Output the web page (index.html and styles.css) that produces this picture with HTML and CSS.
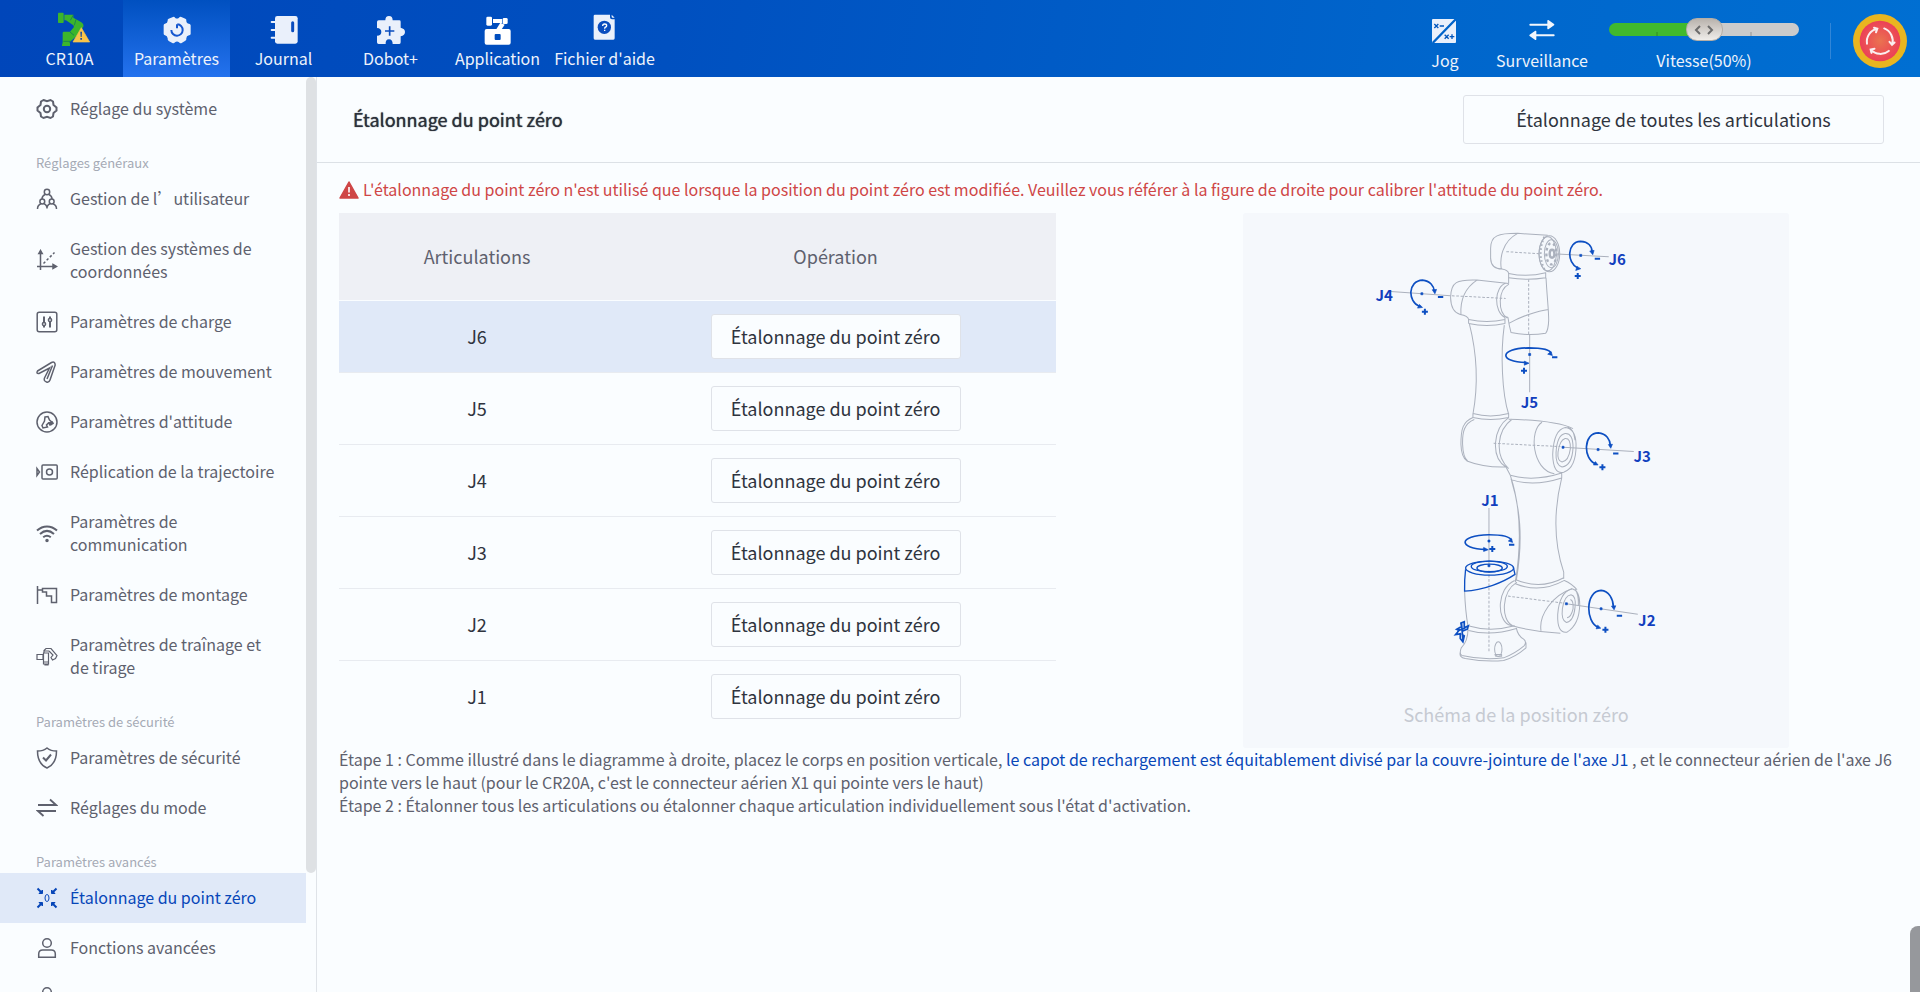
FILE: index.html
```html
<!DOCTYPE html>
<html lang="fr">
<head>
<meta charset="utf-8">
<title>Étalonnage du point zéro</title>
<link rel="stylesheet" href="styles.css">
</head>
<body>
<div class="app">
  <header class="topbar">
    <nav class="tabs" aria-label="Navigation principale">
      <button class="tab" type="button">
        <svg class="tab-icon" viewBox="34 36 108 108" aria-hidden="true">
          <g fill="#3cb52c"><path d="M52 40q0-2 2-2h12q3 0 3 3v25q0 3-3 3H54q-2 0-2-3z"/><path d="M71 44h27v9l24 14q8 5 6 13l-7 9-14 20-19 16h-2l2 5v6H66V99q0-4 4-4h18l12-14-2-5-22-15H71z"/><path d="M64 138v-4l4-8h16l4 8v4z"/></g>
          <path d="M98 45l-9 16M106 58l-5 18M88 96l12 10M68 124h20" stroke="#0a6f5c" stroke-width="2" fill="none"/>
          <path d="M122 83l25 43H97z" fill="#f9c449" stroke="#f9c449" stroke-width="2" stroke-linejoin="round"/>
          <path d="M119 95h5l-1 16h-3zM119 114h5v5h-5z" fill="#1a4a9e"/>
        </svg>
        <span>CR10A</span>
      </button>
      <button class="tab is-active" type="button">
        <svg class="tab-icon" viewBox="355 36 108 108" aria-hidden="true">
          <path fill="#eaf0fb" d="M397 51q4-2 6 2 6 5 12 0 3-4 7-2l12 5q4 2 3 6 0 8 8 9 4 1 5 5v26q-1 4-5 4-8 2-8 9 1 5-3 7l-11 7q-5 2-8-2-6-5-12 0-3 4-8 2l-11-6q-4-3-3-8-1-8-8-9-4-1-4-5V76q0-4 4-5 8-2 8-9-1-4 3-6z"/>
          <path d="M410 73A17 17 0 1 1 392 90M409 73v12" fill="none" stroke="#1657cf" stroke-width="6"/>
        </svg>
        <span>Paramètres</span>
      </button>
      <button class="tab" type="button">
        <svg class="tab-icon" viewBox="676 36 108 108" aria-hidden="true">
          <rect x="703" y="48" width="68" height="83" rx="7" fill="#eaf0fb"/>
          <path d="M693 66h13M693 90h13M693 113h13" stroke="#eaf0fb" stroke-width="6" stroke-linecap="round"/>
          <path d="M756 68v24" stroke="#0a4cbe" stroke-width="9" stroke-linecap="round"/>
        </svg>
        <span>Journal</span>
      </button>
      <button class="tab" type="button">
        <svg class="tab-icon" viewBox="67 36 108 108" aria-hidden="true">
          <path fill="#eaf0fb" d="M84 61h20q0-13 11-13t11 13h20q4 0 4 4v18q13 3 13 13t-13 13v18q0 5-4 5h-20q0-14-11-14t-10 14H84q-5 0-5-5v-20q13 0 13-11T79 84V66q0-5 5-5z"/>
          <path d="M103 93h28M117 79v28" stroke="#0a4cbe" stroke-width="5"/>
        </svg>
        <span>Dobot+</span>
      </button>
      <button class="tab" type="button">
        <svg class="tab-icon" viewBox="388 36 108 108" aria-hidden="true">
          <g fill="#fff"><rect x="407" y="50" width="17" height="27" rx="4"/><rect x="427" y="57" width="27" height="12"/><rect x="456" y="54" width="15" height="18" rx="4"/><path d="M449 68l13 6-12 18h-16z"/><path fill-rule="evenodd" d="M408 87h66q6 0 6 6v35q0 6-6 6h-66q-6 0-6-6V93q0-6 6-6zm27 15q-3 0-3 3v12q0 3 3 3h12q3 0 3-3v-12q0-3-3-3z"/></g>
        </svg>
        <span>Application</span>
      </button>
      <button class="tab" type="button">
        <svg class="tab-icon" viewBox="709 36 108 108" aria-hidden="true">
          <path fill="#eaf0fb" d="M733 44h45v8q0 6 6 6h8v57q0 4-4 4h-55q-4 0-4-4V48q0-4 4-4zM783 44l9 9h-6q-3 0-3-3z"/>
          <circle cx="761" cy="82" r="20" fill="#0a4cbe"/>
          <path d="M756 78q0-6 6-6t6 5q0 3-3 4t-3 5M762 89v4" fill="none" stroke="#fff" stroke-width="4"/>
        </svg>
        <span>Fichier d'aide</span>
      </button>
    </nav>
    <div class="tools">
      <button class="tool tool-jog" type="button">
        <svg class="tab-icon" viewBox="84 42 108 108" aria-hidden="true">
          <rect x="99" y="57" width="72" height="72" rx="3" fill="#eaf0fb"/>
          <path d="M101 129l64-66 6-6" stroke="#0063ca" stroke-width="7"/>
          <path d="M106 72l12 12M118 72l-12 12M122 78h13M137 104l12 12M149 104l-12 12M152 110h14M159 103v14" stroke="#0055bd" stroke-width="4" fill="none"/>
        </svg>
        <span>Jog</span>
      </button>
      <button class="tool tool-watch" type="button">
        <svg class="tab-icon" viewBox="375 42 108 108" aria-hidden="true">
          <path d="M394 74h56M408 106h56" stroke="#f3f7fd" stroke-width="6" stroke-linecap="round"/>
          <path d="M447 62l17 12-17 12zM410 94l-17 12 17 12z" fill="#f3f7fd" stroke="#f3f7fd" stroke-width="4" stroke-linejoin="round"/>
        </svg>
        <span>Surveillance</span>
      </button>
      <div class="speed">
        <div class="speed-control">
          <input id="speed" type="range" min="0" max="100" value="50">
          <svg class="speed-mark" viewBox="0 0 20 10" aria-hidden="true"><path d="M6 1L2 5l4 4M14 1l4 4-4 4" fill="none" stroke="#6b6b6b" stroke-width="2"/></svg>
        </div>
        <label for="speed">Vitesse(50%)</label>
      </div>
      <span class="divider"></span>
      <button class="estop" type="button" aria-label="Arrêt d'urgence">
        <svg viewBox="0 0 162 162" aria-hidden="true">
          <defs><radialGradient id="stop"><stop offset="0" stop-color="#ea7350"/><stop offset="1" stop-color="#ec4057"/></radialGradient></defs>
          <circle cx="81" cy="81" r="81" fill="#e9b520"/><circle cx="81" cy="81" r="61" fill="url(#stop)"/>
          <g fill="none" stroke="#fbeef0" stroke-width="6" stroke-linecap="round">
            <path d="M42 89A40 40 0 0 1 72 44M63 41l10 3-4 11"/>
            <path d="M42 89A40 40 0 0 1 72 44M63 41l10 3-4 11" transform="rotate(120 81 81)"/>
            <path d="M42 89A40 40 0 0 1 72 44M63 41l10 3-4 11" transform="rotate(240 81 81)"/>
          </g>
        </svg>
      </button>
    </div>
  </header>

  <div class="body">
    <aside class="sidebar">
      <nav class="menu" aria-label="Paramètres">
        <a class="item" href="#"><svg viewBox="0 0 22 22"><path stroke-width="2" d="M7.500 2l3.500 1.300L14.500 2l2.500 1.500.5 3.500L20.500 9.500v3L17.500 15l-.5 3.500-2.500 1.500L11 18.700 7.500 20 5 18.500 4.500 15 1.500 12.500v-3L4.500 7 5 3.500z"/><circle cx="11" cy="11" r="3.200" stroke-width="2"/></svg><span>Réglage du système</span></a>
        <h2 class="group">Réglages généraux</h2>
        <a class="item" href="#"><svg viewBox="0 0 22 22"><circle cx="11" cy="4" r="2.700"/><circle cx="6.300" cy="13.500" r="2.400"/><circle cx="15.700" cy="13.500" r="2.400"/><path d="M9 6.500C7 7.500 6 9 6 11M13 6.500c2 1 3 2.500 3 4.500M1.500 21c0-3 1.500-4.500 3.500-5.200M7.800 15.800C10 16.500 11 18 11 20.500c0-2.500 1-4 3.200-4.700M17 15.800c2 .7 3.500 2.200 3.500 5.200"/></svg><span>Gestion de l’utilisateur</span></a>
        <a class="item" href="#"><svg viewBox="0 0 22 22"><path d="M4.500 3v18M1 17.500h18"/><path d="M2.800 4.500L4.500 1.500l1.700 3zM17 15.500l3.500 2-3.500 2z" fill="currentColor"/><path d="M7.500 14.500l11-11" stroke-dasharray="2.500 2"/></svg><span>Gestion des systèmes de coordonnées</span></a>
        <a class="item" href="#"><svg viewBox="0 0 22 22"><rect x="1.200" y="1.200" width="19.600" height="19.600" rx="2"/><path stroke-width="2" d="M8 5.500v11M14 5.500v11"/><circle cx="8" cy="13" r="1.600" fill="#fafdff"/><circle cx="14" cy="9" r="1.600" fill="#fafdff"/></svg><span>Paramètres de charge</span></a>
        <a class="item" href="#"><svg viewBox="0 0 22 22"><path d="M1.500 10L15.500 1.500Q19 0 19.200 4L14 19q-1 2.800-3.500 2Q7.500 20 8.500 17L13.500 7 3 12.500Q0 13 1.500 10z"/><path d="M16.500 4.500L11 18"/></svg><span>Paramètres de mouvement</span></a>
        <a class="item" href="#"><svg viewBox="0 0 22 22"><circle cx="11" cy="11" r="10"/><path d="M9 6l3-.5 1.500 3.500 3 2.500-1.500 2-2.500-1.500-2 2 1 2-4.500 1-1-2.500 2.500-4.500z"/><path d="M13 12l3-1 1 1.500-3 1.500z" fill="currentColor"/></svg><span>Paramètres d'attitude</span></a>
        <a class="item" href="#"><svg viewBox="0 0 22 22"><rect x="6" y="4" width="15.200" height="14" rx="1"/><circle cx="13.500" cy="11" r="3"/><path d="M1 7.500v7l2.500-3.500z"/></svg><span>Réplication de la trajectoire</span></a>
        <a class="item" href="#"><svg viewBox="0 0 22 22"><path stroke-width="2" d="M1 8.500c6-5.500 14-5.500 20 0M4 12c4.500-4 9.500-4 14 0M7.200 15.200c2.500-2 5-2 7.600 0"/><circle cx="11" cy="18.500" r="1" fill="currentColor"/></svg><span>Paramètres de communication</span></a>
        <a class="item" href="#"><svg viewBox="0 0 22 22"><path d="M1.500 2v18M1.500 6h5M6.500 4.500h14V18.500h-5v-6.500h-5V8h-4z"/></svg><span>Paramètres de montage</span></a>
        <a class="item" href="#"><svg viewBox="0 0 22 22"><path stroke-width="1.200" d="M1 9.500h6v5H1zM7.500 8H12.500v11H7.500zM8 7.500V5.500l2-2h5l6 7-1.500 3-3 1.500-1.500-2.500 2-2.500-4-4M8 6h5M8 17h5M9 19v1h3v-1"/></svg><span>Paramètres de traînage et de tirage</span></a>
        <h2 class="group">Paramètres de sécurité</h2>
        <a class="item" href="#"><svg viewBox="0 0 22 22"><path d="M11 1C8.500 3 5 4 1.500 4c0 8 2.500 14 9.500 17 7-3 9.500-9 9.500-17C17 4 13.500 3 11 1z"/><path stroke-width="2" d="M7 10.500l3 3 5-6"/></svg><span>Paramètres de sécurité</span></a>
        <a class="item" href="#"><svg viewBox="0 0 22 22"><path stroke-width="1.800" d="M2 8h18l-6-5.500M20 14H2l5.500 5"/></svg><span>Réglages du mode</span></a>
        <h2 class="group">Paramètres avancés</h2>
        <a class="item is-current" href="#" aria-current="page"><svg viewBox="0 0 22 22"><path stroke-width="2" d="M1.500 1.500l4 4M20.500 1.500l-4 4M1.500 20.500l4-4M20.500 20.500l-4-4"/><path d="M3 6.500h3.500V3zM15.500 3v3.500H19zM3 15.500h3.500V19zM15.500 19v-3.500H19z" fill="currentColor" stroke-width="1"/><ellipse cx="11" cy="11" rx="2" ry="3.500" stroke-width="1"/></svg><span>Étalonnage du point zéro</span></a>
        <a class="item" href="#"><svg viewBox="0 0 22 22"><circle cx="11" cy="6" r="4.300"/><path d="M2.700 20.300V17q0-4 4-4h8.600q4 0 4 4v3.300z"/></svg><span>Fonctions avancées</span></a>
        <a class="item" href="#" aria-label="Suite"><svg viewBox="0 0 22 22"><circle cx="11" cy="6" r="4.300"/></svg></a>
      </nav>
      <div class="scroll-track"><div class="scroll-thumb"></div></div>
    </aside>

    <main class="content">
      <div class="page-head">
        <h1>Étalonnage du point zéro</h1>
        <button class="btn btn-all" type="button">Étalonnage de toutes les articulations</button>
      </div>
      <div class="page-body">
        <p class="notice">
          <svg viewBox="0 0 20 18" aria-hidden="true"><path d="M10 1l9 16H1z" fill="#cf4646" stroke="#cf4646" stroke-width="1.500" stroke-linejoin="round"/><path d="M10 6v5.500M10 13v2" stroke="#fff" stroke-width="1.600"/></svg>
          <span>L'étalonnage du point zéro n'est utilisé que lorsque la position du point zéro est modifiée. Veuillez vous référer à la figure de droite pour calibrer l'attitude du point zéro.</span>
        </p>
        <div class="columns">
          <table class="joints">
            <thead><tr><th scope="col">Articulations</th><th scope="col">Opération</th></tr></thead>
            <tbody>
              <tr class="is-selected"><td>J6</td><td><button class="btn" type="button">Étalonnage du point zéro</button></td></tr>
              <tr><td>J5</td><td><button class="btn" type="button">Étalonnage du point zéro</button></td></tr>
              <tr><td>J4</td><td><button class="btn" type="button">Étalonnage du point zéro</button></td></tr>
              <tr><td>J3</td><td><button class="btn" type="button">Étalonnage du point zéro</button></td></tr>
              <tr><td>J2</td><td><button class="btn" type="button">Étalonnage du point zéro</button></td></tr>
              <tr><td>J1</td><td><button class="btn" type="button">Étalonnage du point zéro</button></td></tr>
            </tbody>
          </table>
          <figure class="diagram">
            <svg viewBox="-351 9 1635 1440" role="img" aria-label="Bras robotique en position zéro">
              <g class="outline">
                <!-- wrist -->
                <path d="M562 76L472 70C415 70 391 75 391 115V145Q392 176 425 177Q443 180 445 190V220M472 70C425 95 418 145 423 177"/>
                <path d="M445 190Q500 202 556 188V203Q500 212 445 203M557 203C560 260 565 300 565 330Q564 360 556 369Q505 378 452 367Q446 345 443 322L438 320M447 339C480 320 530 302 565 298"/>
                <ellipse cx="567" cy="131" rx="31" ry="54"/><ellipse cx="562" cy="131" rx="26" ry="51"/><ellipse cx="573" cy="131" rx="21" ry="42"/>
                <ellipse cx="573" cy="131" rx="15" ry="32" stroke-dasharray="8 9" stroke-width="7"/><ellipse cx="575" cy="131" rx="7" ry="12" stroke-width="7"/>
                <path d="M552 80Q530 130 552 178" stroke-dasharray="5 7" stroke-width="6"/>
                <!-- forearm -->
                <path d="M445 220L350 210C290 208 272 215 271 262Q272 305 300 313Q323 317 325 328V340M350 210C312 235 300 275 302 313M438 219C400 230 400 305 434 322M446 222C412 240 412 305 441 324"/>
                <path d="M325 328Q380 340 434 328M325 340Q380 352 434 340V322M327 340C350 430 355 520 338 612M432 345C420 430 425 550 445 612M338 610Q390 624 445 610V622Q390 634 338 622Z"/>
                <!-- elbow -->
                <path d="M338 622C308 635 302 655 302 702Q303 740 320 752Q370 772 437 770M342 628C312 640 306 665 307 702Q308 740 322 752M445 622C398 655 390 740 437 770L450 795M455 627C410 660 402 735 445 775M445 627C490 628 590 632 638 655M545 636C505 660 515 780 582 790"/>
                <path d="M615 652Q646 656 647 702Q648 772 610 786Q578 793 577 733Q580 658 615 652M622 650Q640 655 644 690M614 670Q638 668 638 712Q635 766 605 770Q585 765 587 727Q590 675 614 670M614 685Q631 683 630 715Q625 752 605 755Q590 752 593 725Q598 690 614 685"/>
                <path d="M450 795Q520 815 604 788V803Q520 830 452 808M450 795C475 870 487 980 465 1115M452 805C478 890 490 980 468 1110M604 803C580 900 578 990 610 1085V1105"/>
                <!-- shoulder -->
                <path d="M465 1107Q540 1140 610 1102M465 1120Q540 1150 612 1110Q635 1120 650 1138M463 1110C408 1135 410 1225 445 1243M470 1115C422 1145 422 1228 456 1245M445 1243Q520 1265 600 1268M635 1135C575 1155 535 1215 542 1261"/>
                <path d="M635 1135Q658 1140 658 1182Q657 1242 620 1265Q590 1270 592 1212Q597 1145 635 1135M644 1136Q655 1150 654 1185M632 1153Q648 1157 644 1190Q640 1232 618 1236Q602 1230 606 1195Q612 1155 632 1153M630 1167Q640 1170 638 1195Q632 1220 620 1222"/>
                <!-- base -->
                <path d="M313 1142Q315 1200 323 1246Q390 1266 463 1246M325 1260Q390 1278 468 1254M323 1246C325 1280 315 1300 303 1312Q296 1330 305 1335Q370 1350 430 1342Q465 1328 492 1305Q500 1295 490 1286Q472 1275 468 1252M300 1326Q296 1340 315 1344Q375 1355 430 1350Q465 1340 497 1312V1296"/>
                <ellipse cx="414" cy="1316" rx="11" ry="22"/><path d="M404 1332h20v5h-18z"/>
                <path d="M590 132L745 140M92 244L271 257M508 372V546M608 711L820 724M386 893V1066M618 1180L832 1211"/>
                <path class="axis" d="M438 125L540 131M275 257L436 265M505 208V372M400 699L600 709M386 1080V1322M443 1157L610 1178"/>
              </g>
              <g class="accent">
                <ellipse cx="388" cy="1073" rx="72" ry="21"/><ellipse cx="387" cy="1068" rx="54" ry="16"/><ellipse cx="388" cy="1073" rx="38" ry="12"/>
                <path d="M316 1077Q312 1110 313 1142C370 1140 430 1115 464 1092L459 1070"/>
                <path d="M302 1238l10-4v18l12-6-3 10-15 6v10l6 4-4 18-8-10v-14l-14 2 12-14-8-2 14-8zM290 1262l26-10M304 1240l4 50" stroke-width="5"/>
              </g>
              <g class="rotation">
                <path d="M652 174C618 158 620 95 660 94C685 95 695 110 695 126M178 289C142 275 142 212 187 210C210 212 221 228 222 243M496 457C416 455 415 415 505 413C550 413 570 420 572 430M704 760C668 745 668 668 714 668C738 670 749 688 750 706M376 1017C295 1015 290 975 386 973C430 973 450 980 454 990M713 1250C675 1235 674 1142 722 1140C746 1142 758 1165 759 1190"/>
                <path class="sign" d="M643 198h18M652 189v18M703 146h16M185 305h18M194 296v18M233 261h16M482 482h18M491 473v18M575 441h16M717 771h18M726 762v18M758 730h16M387 1016h18M396 1007v18M446 1003h16M726 1258h18M735 1249v18M769 1216h16"/>
                <path class="tip" d="M661 176l-15 5 4-12zM697 134l-9-11 13-2zM187 292l-15 2 6-11zM224 251l-8-12 13-1zM506 459l-14 6v-12zM576 436l-14-4 10-8zM713 764l-14 0 6-10zM751 714l-7-11 12-1zM384 1018l-14 5v-12zM457 996l-13-4 9-8zM721 1253l-14 2 5-11zM761 1198l-8-11 13-1z"/>
                <path class="tip" d="M658 133h6v6h-6zM182 248h6v6h-6zM505 430h6v6h-6zM605 708h6v6h-6zM710 715h6v6h-6zM383 989h6v6h-6zM383 1063h6v6h-6zM615 1177h6v6h-6zM719 1192h6v6h-6z"/>
              </g>
              <g class="joint-names">
                <text x="744" y="165">J6</text><text x="46" y="272">J4</text><text x="481" y="594">J5</text><text x="819" y="755">J3</text><text x="363" y="886">J1</text><text x="833" y="1248">J2</text>
              </g>
            </svg>
            <figcaption>Schéma de la position zéro</figcaption>
          </figure>
        </div>
        <div class="steps">
          <p>Étape 1 : Comme illustré dans le diagramme à droite, placez le corps en position verticale, <em>le capot de rechargement est équitablement divisé par la couvre-jointure de l'axe J1</em> , et le connecteur aérien de l'axe J6 pointe vers le haut (pour le CR20A, c'est le connecteur aérien X1 qui pointe vers le haut)</p>
          <p>Étape 2 : Étalonner tous les articulations ou étalonner chaque articulation individuellement sous l'état d'activation.</p>
        </div>
      </div>
    </main>
  </div>
  <div class="drawer-handle"></div>
</div>
</body>
</html>
```
FILE: styles.css
```css
* { box-sizing: border-box; }
body, h1, h2, p, figure { margin: 0; }
body {
  font-family: "Noto Sans CJK SC", sans-serif;
  font-size: 16px;
  line-height: 23px;
  color: #5e616e;
  background: #fafdff;
}
button { font: inherit; color: inherit; border: 0; background: none; padding: 0; cursor: pointer; }

.app { position: relative; display: flex; flex-direction: column; height: 100vh; overflow: hidden; }

.topbar {
  display: flex;
  justify-content: space-between;
  flex: none;
  height: 77px;
  padding: 0 13px 0 16px;
  color: #eef3fb;
  line-height: 20px;
  background: linear-gradient(100deg, #0046ba, #0050c0 35%, #0066cc 75%, #006fd2);
}
.tabs, .tools { display: flex; }
.tab {
  display: flex;
  flex-direction: column;
  align-items: center;
  width: 107px;
  padding-top: 12px;
  white-space: nowrap;
}
.tab.is-active { background: linear-gradient(#0050c0, #2472ee); }
.tab-icon { display: block; flex: none; width: 36px; height: 36px; overflow: visible; }
.tools { align-items: flex-start; gap: 22px; }
.tool { display: flex; flex-direction: column; align-items: center; padding-top: 14px; }
.tool-jog { width: 60px; }
.tool-watch { width: 90px; }
.speed { display: flex; flex-direction: column; align-items: center; width: 190px; padding-top: 18px; }
.speed-control { position: relative; width: 100%; height: 32px; }
.speed input {
  display: block;
  width: 100%;
  height: 23px;
  margin: 0;
  appearance: none;
  background: none;
}
.speed input::-webkit-slider-runnable-track {
  height: 13px;
  border-radius: 7px;
  background:
    linear-gradient(#0002, #0002) 25% 100% / 2px 4px no-repeat,
    linear-gradient(#0002, #0002) 75% 100% / 2px 4px no-repeat,
    linear-gradient(90deg, #41b92d 50%, #cbcbcb 50%);
}
.speed input::-webkit-slider-thumb {
  appearance: none;
  width: 37px;
  height: 23px;
  margin-top: -5px;
  border: 1px solid #b5aea6;
  border-radius: 11px;
  background: linear-gradient(#b9b3ad, #efedea);
}
.speed-mark { position: absolute; top: 7px; left: 50%; width: 20px; height: 10px; margin-left: -10px; pointer-events: none; }
.divider { width: 1px; height: 36px; margin: 23px 0 0 9px; background: #3186d8; }
.estop { width: 54px; height: 54px; margin-top: 14px; }
.estop svg { display: block; width: 100%; }

.body { display: flex; flex: 1; min-height: 0; }
.sidebar { display: flex; flex: none; width: 317px; border-right: 1px solid #dfe3e8; overflow: hidden; }
.menu { flex: 1; padding-top: 7px; overflow: hidden; }
.item {
  display: flex;
  align-items: center;
  gap: 12px;
  padding: 13px 28px 14px 36px;
  color: #5e616e;
  text-decoration: none;
}
.item svg {
  flex: none;
  width: 22px;
  height: 22px;
  fill: none;
  stroke: currentColor;
  stroke-width: 1.5;
}
.item.is-current { color: #0746b8; background: #e0e9f8; }
.group { padding: 17px 0 0 36px; font-size: 13px; font-weight: 400; color: #a5aab5; }
.scroll-track { width: 10px; }
.scroll-thumb { height: 87%; border-radius: 5px; background: #dee1e4; }

.content { flex: 1; min-width: 0; }
.page-head {
  display: flex;
  align-items: center;
  justify-content: space-between;
  height: 86px;
  padding: 0 36px;
  border-bottom: 1px solid #dce1e6;
}
h1 { font-size: 18px; font-weight: 400; color: #2c313b; text-shadow: 0 0 1px #2c313b; }
.btn {
  width: 250px;
  height: 45px;
  border: 1px solid #dfe2e8;
  border-radius: 3px;
  background: #fafdff;
  color: #2f343e;
  font-size: 18px;
}
.btn-all { width: 421px; height: 49px; }

.page-body { padding: 15px 22px; }
.notice { display: flex; align-items: center; gap: 4px; color: #cf4646; }
.notice svg { width: 20px; height: 18px; }
.columns { display: flex; align-items: flex-start; gap: 12%; margin-top: 12px; }
.joints { width: 46%; border-collapse: collapse; table-layout: fixed; font-size: 18px; }
.joints th { height: 87px; padding: 0; font-weight: 400; background: #eef0f5; border-bottom: 1px solid #fafdff; }
.joints th:first-child { width: 38.5%; }
.joints td { height: 72px; padding: 0; text-align: center; color: #2f343e; border-bottom: 1px solid #e8ebf0; }
.joints tr:last-child td { border-bottom: 0; }
.joints .is-selected td { background: #e0e9f8; }

.diagram { width: 35%; padding-bottom: 22px; text-align: center; background: #f5f8fc; border-radius: 3px; }
.diagram svg { display: block; width: 100%; margin-bottom: 9px; }
.diagram figcaption { font-size: 18px; color: #c6cad2; }
.outline { fill: none; stroke: #abb1bd; stroke-width: 3; stroke-linejoin: round; }
.axis { stroke-dasharray: 8 5; }
.accent { fill: none; stroke: #0d4fc2; stroke-width: 4; }
.rotation { fill: none; stroke: #0d4fc2; stroke-width: 5; }
.sign { stroke-width: 6; }
.tip { fill: #0d4fc2; stroke-width: 2; }
.joint-names { font-size: 45px; font-weight: 700; fill: #123fbe; }

.steps em { font-style: normal; color: #0746b8; }

.drawer-handle { position: absolute; right: 0; bottom: 0; width: 10px; height: 66px; border-radius: 8px 0 0 0; background: #96989c; }
```
